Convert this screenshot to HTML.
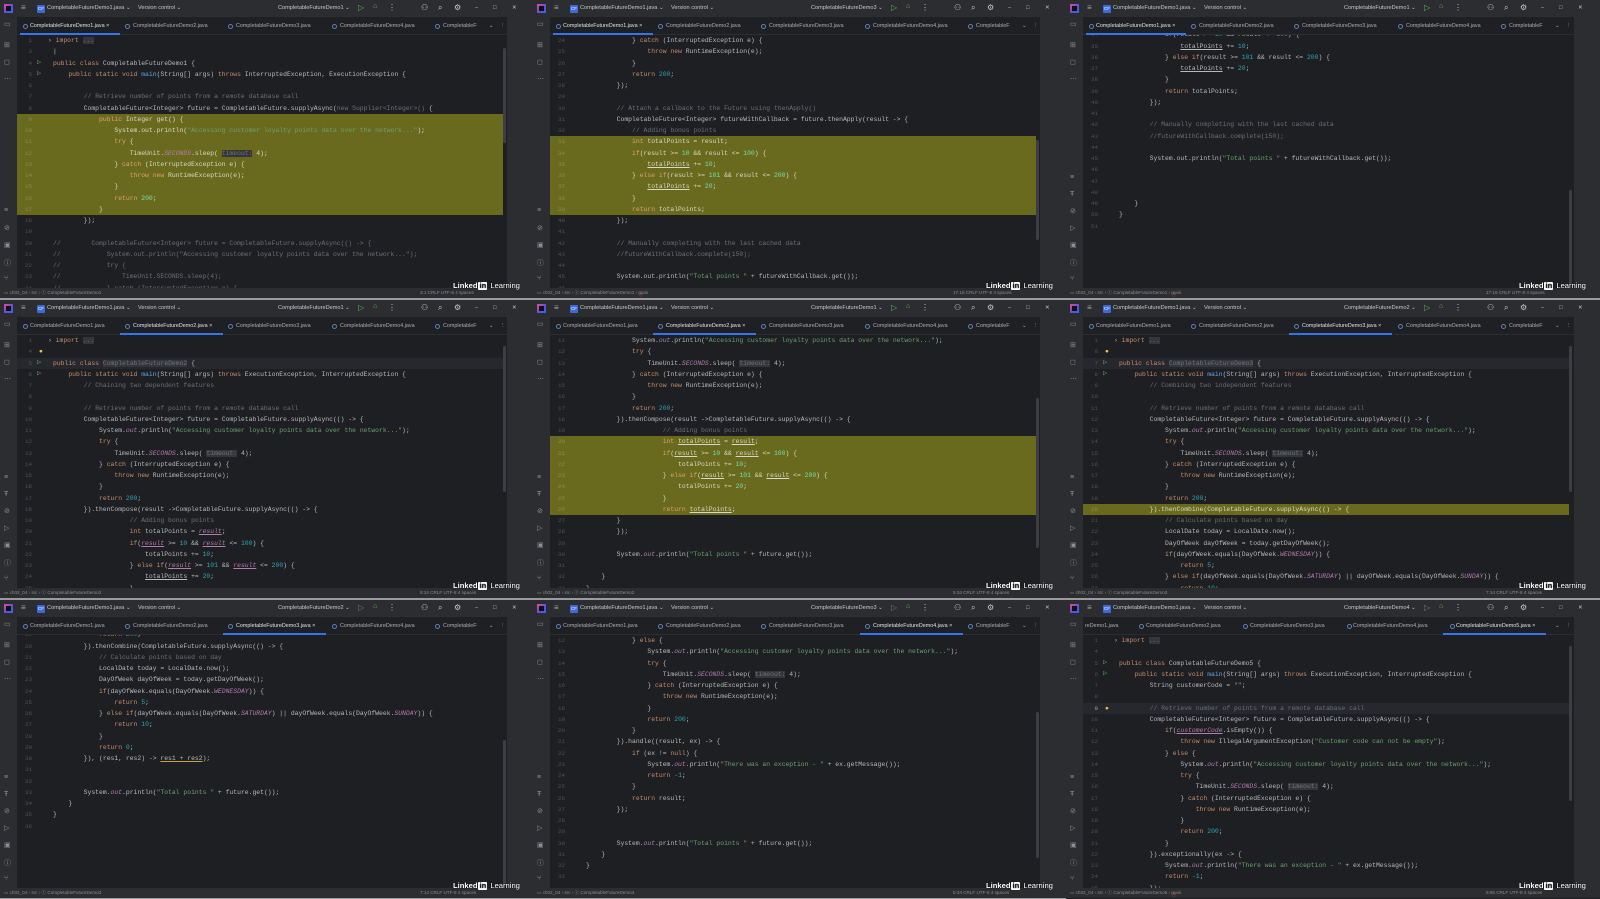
<!DOCTYPE html>
<html><head><meta charset="utf-8">
<style>
*{margin:0;padding:0;box-sizing:border-box}
body{width:1600px;height:899px;background:#1e1f22;position:relative;overflow:hidden;font-family:"Liberation Sans",sans-serif}
.p{position:absolute;width:533px;height:300px;background:#1e1f22;overflow:hidden}
.tb{position:absolute;left:0;top:0;width:100%;height:17px;background:#2b2d30;color:#c5c8cd;font-size:5.6px}
.tb span{position:absolute;top:5px;white-space:nowrap}
.tabs{position:absolute;left:17px;top:17px;right:26px;height:18px;background:#1f2023;border-bottom:1px solid #2b2d30;font-size:5.4px;color:#a9acb2}
.tabs span{position:absolute;top:5.5px;white-space:nowrap}
.tabs .ic{width:5px;height:5px;border-radius:50%;border:1px solid #5d7fb8;top:6.5px}
.ul{position:absolute;bottom:-1px;height:2px;background:#3574f0}
.ls{position:absolute;left:0;top:17px;width:17px;height:271px;background:#2b2d30;color:#8d9096;font-size:7px}
.ls span{position:absolute;left:4px}
.rs{position:absolute;right:0;top:17px;width:26px;height:271px;background:#2b2d30}
.sc{position:absolute;left:503px;width:3px;background:#3c3e43;border-radius:2px}
.ed{position:absolute;left:17px;top:35px;width:486px;height:253px;overflow:hidden;font-family:"Liberation Mono",monospace;font-size:6.4px;color:#b7b9be}
.cd{position:absolute;left:0;top:0;width:100%}
.r{position:relative;height:11.25px;line-height:11.25px;white-space:pre}
.r i{position:absolute;left:0;width:15px;text-align:right;font-style:normal;color:#4e525a;font-size:5.8px}
.r b{position:absolute;left:36px;font-weight:normal}
.r.h{background:#6a6a1f;color:#d8d8c8}
.r.h i{color:#8c8c50}
.r.cl{background:#26282d}
.k{color:#c98c6c}.s{color:#6aa06e}.n{color:#2aa8b5}.c{color:#6b6f76}.f{color:#b37bb0;font-style:italic}.m{color:#5aa3e8}
.hn{background:#34363b;color:#6f737a}
.u{text-decoration:underline}
.h .k{color:#e0a070}.h .n{color:#6ee0b0}
.gi{position:absolute;left:20px;color:#5fb865;font-size:7px}
.sb{position:absolute;left:0;top:288px;width:100%;height:10px;background:#2b2d30;color:#8a8d93;font-size:4.6px}
.sb span{position:absolute;top:2px;white-space:nowrap}
.sep{position:absolute;left:0;top:298px;width:100%;height:2px;background:#9a9b9e}
.wm{position:absolute;left:453px;top:281px;color:#fff;font-size:7.6px;white-space:nowrap;text-shadow:0 0 1px #000}
.wm b{font-weight:bold}
.wm em{font-style:normal;display:inline-block;background:#fff;color:#1e1f22;font-weight:bold;padding:0 1px;border-radius:1px;line-height:8px;margin:0 1px}
.logo{position:absolute;left:4px;top:4px;width:9px;height:9px;background:linear-gradient(135deg,#e84a8f,#5c4ee0 60%,#2a6ef0)}
.logo:after{content:"";position:absolute;left:2px;top:2px;width:5px;height:5px;background:#111}
.cf{position:absolute;left:37px;top:4.5px;width:8px;height:8px;background:#3c6bd9;border-radius:1px;color:#fff;font-size:4.5px;line-height:8px;text-align:center}
</style></head><body>

<!-- ============ PANEL 1 ============ -->
<div class="p" style="left:0;top:0">
<div class="tb"><div class="logo"></div><span style="left:21px;top:3px;font-size:8px;color:#aaa">≡</span><div class="cf">CF</div><span style="left:47px">CompletableFutureDemo1.java ⌄</span><span style="left:138px">Version control ⌄</span><span style="left:278px">CompletableFutureDemo1 ⌄</span><span style="left:358px;top:3px;font-size:8px;color:#5fb865">▷</span><span style="left:373px;top:3px;font-size:7px;color:#5fb865">⌂</span><span style="left:388px;top:3px;font-size:8px">⋮</span><span style="left:421px;top:3px;font-size:8px">⚇</span><span style="left:438px;top:3px;font-size:8px">⌕</span><span style="left:454px;top:3px;font-size:8px">⚙</span><span style="left:475px">–</span><span style="left:493px">□</span><span style="left:512px">✕</span></div>
<div class="ls"><span style="top:3px">▭</span><span style="top:24px">⊞</span><span style="top:41px">◻</span><span style="top:58px">⋯</span><span style="top:190px">≡</span><span style="top:207px">⊘</span><span style="top:224px">▣</span><span style="top:241px">ⓘ</span><span style="top:258px">⑂</span></div>
<div class="tabs"><span class="ic" style="left:6px"></span><span style="left:13px;color:#dfe1e5">CompletableFutureDemo1.java ×</span><span class="ic" style="left:108px"></span><span style="left:116px">CompletableFutureDemo2.java</span><span class="ic" style="left:211px"></span><span style="left:219px">CompletableFutureDemo3.java</span><span class="ic" style="left:315px"></span><span style="left:323px">CompletableFutureDemo4.java</span><span class="ic" style="left:418px"></span><span style="left:426px">CompletableF</span><span style="left:472px">⌄</span><span style="left:483px">⋮</span><div class="ul" style="left:3px;width:100px"></div></div>
<div class="rs"></div>
<div class="sc" style="top:48px;height:95px"></div>
<div class="ed"><div class="cd">
<div class="r"><i>1</i><b style="left:31px">› <span class="k">import</span> <span class="hn">...</span></b></div>
<div class="r"><i>3</i><b>|</b></div>
<div class="r"><i>4</i><span class="gi">▷</span><b><span class="k">public class</span> CompletableFutureDemo1 {</b></div>
<div class="r"><i>5</i><span class="gi">▷</span><b>    <span class="k">public static void</span> <span class="m">main</span>(String[] args) <span class="k">throws</span> InterruptedException, ExecutionException {</b></div>
<div class="r"><i>6</i><b></b></div>
<div class="r"><i>7</i><b>        <span class="c">// Retrieve number of points from a remote database call</span></b></div>
<div class="r"><i>8</i><b>        CompletableFuture&lt;Integer&gt; future = CompletableFuture.supplyAsync(<span class="c">new Supplier&lt;Integer&gt;()</span> {</b></div>
<div class="r h"><i>9</i><b>            <span class="k">public</span> Integer get() {</b></div>
<div class="r h"><i>10</i><b>                System.out.println(<span class="s">"Accessing customer loyalty points data over the network..."</span>);</b></div>
<div class="r h"><i>11</i><b>                <span class="k">try</span> {</b></div>
<div class="r h"><i>12</i><b>                    TimeUnit.<span class="f">SECONDS</span>.sleep( <span class="hn">timeout:</span> 4);</b></div>
<div class="r h"><i>13</i><b>                } <span class="k">catch</span> (InterruptedException e) {</b></div>
<div class="r h"><i>14</i><b>                    <span class="k">throw new</span> RuntimeException(e);</b></div>
<div class="r h"><i>15</i><b>                }</b></div>
<div class="r h"><i>16</i><b>                <span class="k">return</span> <span class="n">200</span>;</b></div>
<div class="r h"><i>17</i><b>            }</b></div>
<div class="r"><i>18</i><b>        });</b></div>
<div class="r"><i>19</i><b></b></div>
<div class="r c"><i>20</i><b>//        CompletableFuture&lt;Integer&gt; future = CompletableFuture.supplyAsync(() -&gt; {</b></div>
<div class="r c"><i>21</i><b>//            System.out.println("Accessing customer loyalty points data over the network...");</b></div>
<div class="r c"><i>22</i><b>//            try {</b></div>
<div class="r c"><i>23</i><b>//                TimeUnit.SECONDS.sleep(4);</b></div>
<div class="r c"><i>24</i><b>//            } catch (InterruptedException e) {</b></div>
</div></div>
<div class="sb"><span style="left:4px">▭ ch02_04 › src › ⓒ CompletableFutureDemo1</span><span style="left:420px">3:1   CRLF   UTF-8   4 spaces</span></div>
<div class="wm"><b>Linked</b><em>in</em> Learning</div>
<div class="sep"></div>
</div>

<!-- ============ PANEL 2 ============ -->
<div class="p" style="left:533px;top:0">
<div class="tb"><div class="logo"></div><span style="left:21px;top:3px;font-size:8px;color:#aaa">≡</span><div class="cf">CF</div><span style="left:47px">CompletableFutureDemo1.java ⌄</span><span style="left:138px">Version control ⌄</span><span style="left:278px">CompletableFutureDemo3 ⌄</span><span style="left:358px;top:3px;font-size:8px;color:#5fb865">▷</span><span style="left:373px;top:3px;font-size:7px;color:#5fb865">⌂</span><span style="left:388px;top:3px;font-size:8px">⋮</span><span style="left:421px;top:3px;font-size:8px">⚇</span><span style="left:438px;top:3px;font-size:8px">⌕</span><span style="left:454px;top:3px;font-size:8px">⚙</span><span style="left:475px">–</span><span style="left:493px">□</span><span style="left:512px">✕</span></div>
<div class="ls"><span style="top:3px">▭</span><span style="top:24px">⊞</span><span style="top:41px">◻</span><span style="top:58px">⋯</span><span style="top:190px">≡</span><span style="top:207px">⊘</span><span style="top:224px">▣</span><span style="top:241px">ⓘ</span><span style="top:258px">⑂</span></div>
<div class="tabs"><span class="ic" style="left:6px"></span><span style="left:13px;color:#dfe1e5">CompletableFutureDemo1.java ×</span><span class="ic" style="left:108px"></span><span style="left:116px">CompletableFutureDemo2.java</span><span class="ic" style="left:211px"></span><span style="left:219px">CompletableFutureDemo3.java</span><span class="ic" style="left:315px"></span><span style="left:323px">CompletableFutureDemo4.java</span><span class="ic" style="left:418px"></span><span style="left:426px">CompletableF</span><span style="left:472px">⌄</span><span style="left:483px">⋮</span><div class="ul" style="left:3px;width:100px"></div></div>
<div class="rs"></div>
<div class="sc" style="top:140px;height:100px"></div>
<div class="ed"><div class="cd">
<div class="r"><i>24</i><b>            } <span class="k">catch</span> (InterruptedException e) {</b></div>
<div class="r"><i>25</i><b>                <span class="k">throw new</span> RuntimeException(e);</b></div>
<div class="r"><i>26</i><b>            }</b></div>
<div class="r"><i>27</i><b>            <span class="k">return</span> <span class="n">200</span>;</b></div>
<div class="r"><i>28</i><b>        });</b></div>
<div class="r"><i>29</i><b></b></div>
<div class="r"><i>30</i><b>        <span class="c">// Attach a callback to the Future using thenApply()</span></b></div>
<div class="r"><i>31</i><b>        CompletableFuture&lt;Integer&gt; futureWithCallback = future.thenApply(result -&gt; {</b></div>
<div class="r"><i>32</i><b>            <span class="c">// Adding bonus points</span></b></div>
<div class="r h"><i>33</i><b>            <span class="k">int</span> totalPoints = result;</b></div>
<div class="r h"><i>34</i><b>            <span class="k">if</span>(result &gt;= <span class="n">10</span> &amp;&amp; result &lt;= <span class="n">100</span>) {</b></div>
<div class="r h"><i>35</i><b>                <span class="u">totalPoints</span> += <span class="n">10</span>;</b></div>
<div class="r h"><i>36</i><b>            } <span class="k">else if</span>(result &gt;= <span class="n">101</span> &amp;&amp; result &lt;= <span class="n">200</span>) {</b></div>
<div class="r h"><i>37</i><b>                <span class="u">totalPoints</span> += <span class="n">20</span>;</b></div>
<div class="r h"><i>38</i><b>            }</b></div>
<div class="r h"><i>39</i><b>            <span class="k">return</span> totalPoints;</b></div>
<div class="r"><i>40</i><b>        });</b></div>
<div class="r"><i>41</i><b></b></div>
<div class="r"><i>42</i><b>        <span class="c">// Manually completing with the last cached data</span></b></div>
<div class="r"><i>43</i><b>        <span class="c">//futureWithCallback.complete(150);</span></b></div>
<div class="r"><i>44</i><b></b></div>
<div class="r"><i>45</i><b>        System.out.println(<span class="s">"Total points "</span> + futureWithCallback.get());</b></div>
<div class="r"><i>46</i><b></b></div>
</div></div>
<div class="sb"><span style="left:4px">▭ ch02_04 › src › ⓒ CompletableFutureDemo1 › <span style="color:#d9534f">ⓜ</span> main</span><span style="left:420px">17:16   CRLF   UTF-8   4 spaces</span></div>
<div class="wm"><b>Linked</b><em>in</em> Learning</div>
<div class="sep"></div>
</div>

<!-- ============ PANEL 3 ============ -->
<div class="p" style="left:1066px;top:0;width:534px">
<div class="tb"><div class="logo"></div><span style="left:21px;top:3px;font-size:8px;color:#aaa">≡</span><div class="cf">CF</div><span style="left:47px">CompletableFutureDemo1.java ⌄</span><span style="left:138px">Version control ⌄</span><span style="left:278px">CompletableFutureDemo1 ⌄</span><span style="left:358px;top:3px;font-size:8px;color:#5fb865">▷</span><span style="left:373px;top:3px;font-size:7px;color:#5fb865">⌂</span><span style="left:388px;top:3px;font-size:8px">⋮</span><span style="left:421px;top:3px;font-size:8px">⚇</span><span style="left:438px;top:3px;font-size:8px">⌕</span><span style="left:454px;top:3px;font-size:8px">⚙</span><span style="left:475px">–</span><span style="left:493px">□</span><span style="left:512px">✕</span></div>
<div class="ls"><span style="top:3px">▭</span><span style="top:24px">⊞</span><span style="top:41px">◻</span><span style="top:58px">⋯</span><span style="top:157px">≡</span><span style="top:174px">Ŧ</span><span style="top:190px">⊘</span><span style="top:207px">▷</span><span style="top:224px">▣</span><span style="top:241px">ⓘ</span><span style="top:258px">⑂</span></div>
<div class="tabs"><span class="ic" style="left:6px"></span><span style="left:13px;color:#dfe1e5">CompletableFutureDemo1.java ×</span><span class="ic" style="left:108px"></span><span style="left:116px">CompletableFutureDemo2.java</span><span class="ic" style="left:211px"></span><span style="left:219px">CompletableFutureDemo3.java</span><span class="ic" style="left:315px"></span><span style="left:323px">CompletableFutureDemo4.java</span><span class="ic" style="left:418px"></span><span style="left:426px">CompletableF</span><span style="left:472px">⌄</span><span style="left:483px">⋮</span><div class="ul" style="left:3px;width:100px"></div></div>
<div class="rs"></div>
<div class="sc" style="top:190px;height:95px"></div>
<div class="ed"><div class="cd" style="top:-5.6px">
<div class="r"><i>34</i><b>            <span class="k">if</span>(result &gt;= <span class="n">10</span> &amp;&amp; result &lt;= <span class="n">100</span>) {</b></div>
<div class="r"><i>35</i><b>                <span class="u">totalPoints</span> += <span class="n">10</span>;</b></div>
<div class="r"><i>36</i><b>            } <span class="k">else if</span>(result &gt;= <span class="n">101</span> &amp;&amp; result &lt;= <span class="n">200</span>) {</b></div>
<div class="r"><i>37</i><b>                <span class="u">totalPoints</span> += <span class="n">20</span>;</b></div>
<div class="r"><i>38</i><b>            }</b></div>
<div class="r"><i>39</i><b>            <span class="k">return</span> totalPoints;</b></div>
<div class="r"><i>40</i><b>        });</b></div>
<div class="r"><i>41</i><b></b></div>
<div class="r"><i>42</i><b>        <span class="c">// Manually completing with the last cached data</span></b></div>
<div class="r"><i>43</i><b>        <span class="c">//futureWithCallback.complete(150);</span></b></div>
<div class="r"><i>44</i><b></b></div>
<div class="r"><i>45</i><b>        System.out.println(<span class="s">"Total points "</span> + futureWithCallback.get());</b></div>
<div class="r"><i>46</i><b></b></div>
<div class="r"><i>47</i><b></b></div>
<div class="r"><i>48</i><b></b></div>
<div class="r"><i>49</i><b>    }</b></div>
<div class="r"><i>50</i><b>}</b></div>
<div class="r"><i>51</i><b></b></div>
</div></div>
<div class="sb"><span style="left:4px">▭ ch02_04 › src › ⓒ CompletableFutureDemo1 › <span style="color:#d9534f">ⓜ</span> main</span><span style="left:420px">17:16   CRLF   UTF-8   4 spaces</span></div>
<div class="wm"><b>Linked</b><em>in</em> Learning</div>
<div class="sep"></div>
</div>

<!-- ============ PANEL 4 ============ -->
<div class="p" style="left:0;top:300px">
<div class="tb"><div class="logo"></div><span style="left:21px;top:3px;font-size:8px;color:#aaa">≡</span><div class="cf">CF</div><span style="left:47px">CompletableFutureDemo1.java ⌄</span><span style="left:138px">Version control ⌄</span><span style="left:278px">CompletableFutureDemo1 ⌄</span><span style="left:358px;top:3px;font-size:8px;color:#5fb865">▷</span><span style="left:373px;top:3px;font-size:7px;color:#5fb865">⌂</span><span style="left:388px;top:3px;font-size:8px">⋮</span><span style="left:421px;top:3px;font-size:8px">⚇</span><span style="left:438px;top:3px;font-size:8px">⌕</span><span style="left:454px;top:3px;font-size:8px">⚙</span><span style="left:475px">–</span><span style="left:493px">□</span><span style="left:512px">✕</span></div>
<div class="ls"><span style="top:3px">▭</span><span style="top:24px">⊞</span><span style="top:41px">◻</span><span style="top:58px">⋯</span><span style="top:157px">≡</span><span style="top:174px">Ŧ</span><span style="top:190px">⊘</span><span style="top:207px">▷</span><span style="top:224px">▣</span><span style="top:241px">ⓘ</span><span style="top:258px">⑂</span></div>
<div class="tabs"><span class="ic" style="left:6px"></span><span style="left:13px">CompletableFutureDemo1.java</span><span class="ic" style="left:108px"></span><span style="left:116px;color:#dfe1e5">CompletableFutureDemo2.java ×</span><span class="ic" style="left:211px"></span><span style="left:219px">CompletableFutureDemo3.java</span><span class="ic" style="left:315px"></span><span style="left:323px">CompletableFutureDemo4.java</span><span class="ic" style="left:418px"></span><span style="left:426px">CompletableF</span><span style="left:472px">⌄</span><span style="left:483px">⋮</span><div class="ul" style="left:103px;width:103px"></div></div>
<div class="rs"></div>
<div class="sc" style="top:46px;height:146px"></div>
<div class="ed"><div class="cd">
<div class="r"><i>1</i><b style="left:31px">› <span class="k">import</span> <span class="hn">...</span></b></div>
<div class="r"><i>4</i><b style="left:22px;color:#e8c44a">●</b></div>
<div class="r cl"><i>5</i><span class="gi">▷</span><b><span class="k">public class</span> <span class="hn">CompletableFutureDemo2</span> {</b></div>
<div class="r"><i>6</i><span class="gi">▷</span><b>    <span class="k">public static void</span> <span class="m">main</span>(String[] args) <span class="k">throws</span> ExecutionException, InterruptedException {</b></div>
<div class="r"><i>7</i><b>        <span class="c">// Chaining two dependent features</span></b></div>
<div class="r"><i>8</i><b></b></div>
<div class="r"><i>9</i><b>        <span class="c">// Retrieve number of points from a remote database call</span></b></div>
<div class="r"><i>10</i><b>        CompletableFuture&lt;Integer&gt; future = CompletableFuture.supplyAsync(() -&gt; {</b></div>
<div class="r"><i>11</i><b>            System.<span class="f">out</span>.println(<span class="s">"Accessing customer loyalty points data over the network..."</span>);</b></div>
<div class="r"><i>12</i><b>            <span class="k">try</span> {</b></div>
<div class="r"><i>13</i><b>                TimeUnit.<span class="f">SECONDS</span>.sleep( <span class="hn">timeout:</span> 4);</b></div>
<div class="r"><i>14</i><b>            } <span class="k">catch</span> (InterruptedException e) {</b></div>
<div class="r"><i>15</i><b>                <span class="k">throw new</span> RuntimeException(e);</b></div>
<div class="r"><i>16</i><b>            }</b></div>
<div class="r"><i>17</i><b>            <span class="k">return</span> <span class="n">200</span>;</b></div>
<div class="r"><i>18</i><b>        }).thenCompose(result -&gt;CompletableFuture.supplyAsync(() -&gt; {</b></div>
<div class="r"><i>19</i><b>                    <span class="c">// Adding bonus points</span></b></div>
<div class="r"><i>20</i><b>                    <span class="k">int</span> totalPoints = <span class="f u">result</span>;</b></div>
<div class="r"><i>21</i><b>                    <span class="k">if</span>(<span class="f u">result</span> &gt;= <span class="n">10</span> &amp;&amp; <span class="f u">result</span> &lt;= <span class="n">100</span>) {</b></div>
<div class="r"><i>22</i><b>                        totalPoints += <span class="n">10</span>;</b></div>
<div class="r"><i>23</i><b>                    } <span class="k">else if</span>(<span class="f u">result</span> &gt;= <span class="n">101</span> &amp;&amp; <span class="f u">result</span> &lt;= <span class="n">200</span>) {</b></div>
<div class="r"><i>24</i><b>                        <span class="u">totalPoints</span> += <span class="n">20</span>;</b></div>
<div class="r"><i>25</i><b>                    }</b></div>
</div></div>
<div class="sb"><span style="left:4px">▭ ch02_04 › src › ⓒ CompletableFutureDemo2</span><span style="left:420px">5:34   CRLF   UTF-8   4 spaces</span></div>
<div class="wm"><b>Linked</b><em>in</em> Learning</div>
<div class="sep"></div>
</div>

<!-- ============ PANEL 5 ============ -->
<div class="p" style="left:533px;top:300px">
<div class="tb"><div class="logo"></div><span style="left:21px;top:3px;font-size:8px;color:#aaa">≡</span><div class="cf">CF</div><span style="left:47px">CompletableFutureDemo1.java ⌄</span><span style="left:138px">Version control ⌄</span><span style="left:278px">CompletableFutureDemo1 ⌄</span><span style="left:358px;top:3px;font-size:8px;color:#5fb865">▷</span><span style="left:373px;top:3px;font-size:7px;color:#5fb865">⌂</span><span style="left:388px;top:3px;font-size:8px">⋮</span><span style="left:421px;top:3px;font-size:8px">⚇</span><span style="left:438px;top:3px;font-size:8px">⌕</span><span style="left:454px;top:3px;font-size:8px">⚙</span><span style="left:475px">–</span><span style="left:493px">□</span><span style="left:512px">✕</span></div>
<div class="ls"><span style="top:3px">▭</span><span style="top:24px">⊞</span><span style="top:41px">◻</span><span style="top:58px">⋯</span><span style="top:157px">≡</span><span style="top:174px">Ŧ</span><span style="top:190px">⊘</span><span style="top:207px">▷</span><span style="top:224px">▣</span><span style="top:241px">ⓘ</span><span style="top:258px">⑂</span></div>
<div class="tabs"><span class="ic" style="left:6px"></span><span style="left:13px">CompletableFutureDemo1.java</span><span class="ic" style="left:108px"></span><span style="left:116px;color:#dfe1e5">CompletableFutureDemo2.java ×</span><span class="ic" style="left:211px"></span><span style="left:219px">CompletableFutureDemo3.java</span><span class="ic" style="left:315px"></span><span style="left:323px">CompletableFutureDemo4.java</span><span class="ic" style="left:418px"></span><span style="left:426px">CompletableF</span><span style="left:472px">⌄</span><span style="left:483px">⋮</span><div class="ul" style="left:103px;width:103px"></div></div>
<div class="rs"></div>
<div class="sc" style="top:98px;height:150px"></div>
<div class="ed"><div class="cd">
<div class="r"><i>11</i><b>            System.<span class="f">out</span>.println(<span class="s">"Accessing customer loyalty points data over the network..."</span>);</b></div>
<div class="r"><i>12</i><b>            <span class="k">try</span> {</b></div>
<div class="r"><i>13</i><b>                TimeUnit.<span class="f">SECONDS</span>.sleep( <span class="hn">timeout:</span> 4);</b></div>
<div class="r"><i>14</i><b>            } <span class="k">catch</span> (InterruptedException e) {</b></div>
<div class="r"><i>15</i><b>                <span class="k">throw new</span> RuntimeException(e);</b></div>
<div class="r"><i>16</i><b>            }</b></div>
<div class="r"><i>17</i><b>            <span class="k">return</span> <span class="n">200</span>;</b></div>
<div class="r"><i>18</i><b>        }).thenCompose(result -&gt;CompletableFuture.supplyAsync(() -&gt; {</b></div>
<div class="r"><i>19</i><b>                    <span class="c">// Adding bonus points</span></b></div>
<div class="r h"><i>20</i><b>                    <span class="k">int</span> <span class="u">totalPoints</span> = <span class="u">result</span>;</b></div>
<div class="r h"><i>21</i><b>                    <span class="k">if</span>(<span class="u">result</span> &gt;= <span class="n">10</span> &amp;&amp; <span class="u">result</span> &lt;= <span class="n">100</span>) {</b></div>
<div class="r h"><i>22</i><b>                        totalPoints += <span class="n">10</span>;</b></div>
<div class="r h"><i>23</i><b>                    } <span class="k">else if</span>(<span class="u">result</span> &gt;= <span class="n">101</span> &amp;&amp; <span class="u">result</span> &lt;= <span class="n">200</span>) {</b></div>
<div class="r h"><i>24</i><b>                        totalPoints += <span class="n">20</span>;</b></div>
<div class="r h"><i>25</i><b>                    }</b></div>
<div class="r h"><i>26</i><b>                    <span class="k">return</span> <span class="u">totalPoints</span>;</b></div>
<div class="r"><i>27</i><b>        }</b></div>
<div class="r"><i>28</i><b>        });</b></div>
<div class="r"><i>29</i><b></b></div>
<div class="r"><i>30</i><b>        System.<span class="f">out</span>.println(<span class="s">"Total points "</span> + future.get());</b></div>
<div class="r"><i>31</i><b></b></div>
<div class="r"><i>32</i><b>    }</b></div>
<div class="r"><i>33</i><b>}</b></div>
</div></div>
<div class="sb"><span style="left:4px">▭ ch02_04 › src › ⓒ CompletableFutureDemo2</span><span style="left:420px">5:34   CRLF   UTF-8   4 spaces</span></div>
<div class="wm"><b>Linked</b><em>in</em> Learning</div>
<div class="sep"></div>
</div>

<!-- ============ PANEL 6 ============ -->
<div class="p" style="left:1066px;top:300px;width:534px">
<div class="tb"><div class="logo"></div><span style="left:21px;top:3px;font-size:8px;color:#aaa">≡</span><div class="cf">CF</div><span style="left:47px">CompletableFutureDemo1.java ⌄</span><span style="left:138px">Version control ⌄</span><span style="left:278px">CompletableFutureDemo2 ⌄</span><span style="left:358px;top:3px;font-size:8px;color:#5fb865">▷</span><span style="left:373px;top:3px;font-size:7px;color:#5fb865">⌂</span><span style="left:388px;top:3px;font-size:8px">⋮</span><span style="left:421px;top:3px;font-size:8px">⚇</span><span style="left:438px;top:3px;font-size:8px">⌕</span><span style="left:454px;top:3px;font-size:8px">⚙</span><span style="left:475px">–</span><span style="left:493px">□</span><span style="left:512px">✕</span></div>
<div class="ls"><span style="top:3px">▭</span><span style="top:24px">⊞</span><span style="top:41px">◻</span><span style="top:58px">⋯</span><span style="top:157px">≡</span><span style="top:174px">Ŧ</span><span style="top:190px">⊘</span><span style="top:207px">▷</span><span style="top:224px">▣</span><span style="top:241px">ⓘ</span><span style="top:258px">⑂</span></div>
<div class="tabs"><span class="ic" style="left:6px"></span><span style="left:13px">CompletableFutureDemo1.java</span><span class="ic" style="left:108px"></span><span style="left:116px">CompletableFutureDemo2.java</span><span class="ic" style="left:211px"></span><span style="left:219px;color:#dfe1e5">CompletableFutureDemo3.java ×</span><span class="ic" style="left:315px"></span><span style="left:323px">CompletableFutureDemo4.java</span><span class="ic" style="left:418px"></span><span style="left:426px">CompletableF</span><span style="left:472px">⌄</span><span style="left:483px">⋮</span><div class="ul" style="left:206px;width:103px"></div></div>
<div class="rs"></div>
<div class="sc" style="top:46px;height:146px"></div>
<div class="ed"><div class="cd">
<div class="r"><i>1</i><b style="left:31px">› <span class="k">import</span> <span class="hn">...</span></b></div>
<div class="r"><i>6</i><b style="left:22px;color:#e8c44a">●</b></div>
<div class="r cl"><i>7</i><span class="gi">▷</span><b><span class="k">public class</span> <span class="hn">CompletableFutureDemo3</span> {</b></div>
<div class="r"><i>8</i><span class="gi">▷</span><b>    <span class="k">public static void</span> <span class="m">main</span>(String[] args) <span class="k">throws</span> ExecutionException, InterruptedException {</b></div>
<div class="r"><i>9</i><b>        <span class="c">// Combining two independent features</span></b></div>
<div class="r"><i>10</i><b></b></div>
<div class="r"><i>11</i><b>        <span class="c">// Retrieve number of points from a remote database call</span></b></div>
<div class="r"><i>12</i><b>        CompletableFuture&lt;Integer&gt; future = CompletableFuture.supplyAsync(() -&gt; {</b></div>
<div class="r"><i>13</i><b>            System.<span class="f">out</span>.println(<span class="s">"Accessing customer loyalty points data over the network..."</span>);</b></div>
<div class="r"><i>14</i><b>            <span class="k">try</span> {</b></div>
<div class="r"><i>15</i><b>                TimeUnit.<span class="f">SECONDS</span>.sleep( <span class="hn">timeout:</span> 4);</b></div>
<div class="r"><i>16</i><b>            } <span class="k">catch</span> (InterruptedException e) {</b></div>
<div class="r"><i>17</i><b>                <span class="k">throw new</span> RuntimeException(e);</b></div>
<div class="r"><i>18</i><b>            }</b></div>
<div class="r"><i>19</i><b>            <span class="k">return</span> <span class="n">200</span>;</b></div>
<div class="r h"><i>20</i><b>        }).thenCombine(CompletableFuture.supplyAsync(() -&gt; {</b></div>
<div class="r"><i>21</i><b>            <span class="c">// Calculate points based on day</span></b></div>
<div class="r"><i>22</i><b>            LocalDate today = LocalDate.now();</b></div>
<div class="r"><i>23</i><b>            DayOfWeek dayOfWeek = today.getDayOfWeek();</b></div>
<div class="r"><i>24</i><b>            <span class="k">if</span>(dayOfWeek.equals(DayOfWeek.<span class="f">WEDNESDAY</span>)) {</b></div>
<div class="r"><i>25</i><b>                <span class="k">return</span> <span class="n">5</span>;</b></div>
<div class="r"><i>26</i><b>            } <span class="k">else if</span>(dayOfWeek.equals(DayOfWeek.<span class="f">SATURDAY</span>) || dayOfWeek.equals(DayOfWeek.<span class="f">SUNDAY</span>)) {</b></div>
<div class="r"><i>27</i><b>                <span class="k">return</span> <span class="n">10</span>;</b></div>
</div></div>
<div class="sb"><span style="left:4px">▭ ch02_04 › src › ⓒ CompletableFutureDemo3</span><span style="left:420px">7:14   CRLF   UTF-8   4 spaces</span></div>
<div class="wm"><b>Linked</b><em>in</em> Learning</div>
<div class="sep"></div>
</div>

<!-- ============ PANEL 7 ============ -->
<div class="p" style="left:0;top:600px;height:299px">
<div class="tb"><div class="logo"></div><span style="left:21px;top:3px;font-size:8px;color:#aaa">≡</span><div class="cf">CF</div><span style="left:47px">CompletableFutureDemo1.java ⌄</span><span style="left:138px">Version control ⌄</span><span style="left:278px">CompletableFutureDemo2 ⌄</span><span style="left:358px;top:3px;font-size:8px;color:#777">▷</span><span style="left:373px;top:3px;font-size:7px;color:#5fb865">⌂</span><span style="left:388px;top:3px;font-size:8px">⋮</span><span style="left:421px;top:3px;font-size:8px">⚇</span><span style="left:438px;top:3px;font-size:8px">⌕</span><span style="left:454px;top:3px;font-size:8px">⚙</span><span style="left:475px">–</span><span style="left:493px">□</span><span style="left:512px">✕</span></div>
<div class="ls"><span style="top:3px">▭</span><span style="top:24px">⊞</span><span style="top:41px">◻</span><span style="top:58px">⋯</span><span style="top:157px">≡</span><span style="top:174px">Ŧ</span><span style="top:190px">⊘</span><span style="top:207px">▷</span><span style="top:224px">▣</span><span style="top:241px">ⓘ</span><span style="top:258px">⑂</span></div>
<div class="tabs"><span class="ic" style="left:6px"></span><span style="left:13px">CompletableFutureDemo1.java</span><span class="ic" style="left:108px"></span><span style="left:116px">CompletableFutureDemo2.java</span><span class="ic" style="left:211px"></span><span style="left:219px;color:#dfe1e5">CompletableFutureDemo3.java ×</span><span class="ic" style="left:315px"></span><span style="left:323px">CompletableFutureDemo4.java</span><span class="ic" style="left:418px"></span><span style="left:426px">CompletableF</span><span style="left:472px">⌄</span><span style="left:483px">⋮</span><div class="ul" style="left:206px;width:103px"></div></div>
<div class="rs"></div>
<div class="sc" style="top:140px;height:146px"></div>
<div class="ed"><div class="cd" style="top:-5.6px">
<div class="r"><i>19</i><b>            <span class="k">return</span> <span class="n">200</span>;</b></div>
<div class="r"><i>20</i><b>        }).thenCombine(CompletableFuture.supplyAsync(() -&gt; {</b></div>
<div class="r"><i>21</i><b>            <span class="c">// Calculate points based on day</span></b></div>
<div class="r"><i>22</i><b>            LocalDate today = LocalDate.now();</b></div>
<div class="r"><i>23</i><b>            DayOfWeek dayOfWeek = today.getDayOfWeek();</b></div>
<div class="r"><i>24</i><b>            <span class="k">if</span>(dayOfWeek.equals(DayOfWeek.<span class="f">WEDNESDAY</span>)) {</b></div>
<div class="r"><i>25</i><b>                <span class="k">return</span> <span class="n">5</span>;</b></div>
<div class="r"><i>26</i><b>            } <span class="k">else if</span>(dayOfWeek.equals(DayOfWeek.<span class="f">SATURDAY</span>) || dayOfWeek.equals(DayOfWeek.<span class="f">SUNDAY</span>)) {</b></div>
<div class="r"><i>27</i><b>                <span class="k">return</span> <span class="n">10</span>;</b></div>
<div class="r"><i>28</i><b>            }</b></div>
<div class="r"><i>29</i><b>            <span class="k">return</span> <span class="n">0</span>;</b></div>
<div class="r"><i>30</i><b>        }), (res1, res2) -&gt; <span class="u" style="text-decoration-color:#c9a040">res1 + res2</span>);</b></div>
<div class="r"><i>31</i><b></b></div>
<div class="r"><i>32</i><b></b></div>
<div class="r"><i>33</i><b>        System.<span class="f">out</span>.println(<span class="s">"Total points "</span> + future.get());</b></div>
<div class="r"><i>34</i><b>    }</b></div>
<div class="r"><i>35</i><b>}</b></div>
<div class="r"><i>36</i><b></b></div>
</div></div>
<div class="sb"><span style="left:4px">▭ ch02_04 › src › ⓒ CompletableFutureDemo3</span><span style="left:420px">7:14   CRLF   UTF-8   4 spaces</span></div>
<div class="wm"><b>Linked</b><em>in</em> Learning</div>
<div class="sep"></div>
</div>

<!-- ============ PANEL 8 ============ -->
<div class="p" style="left:533px;top:600px;height:299px">
<div class="tb"><div class="logo"></div><span style="left:21px;top:3px;font-size:8px;color:#aaa">≡</span><div class="cf">CF</div><span style="left:47px">CompletableFutureDemo1.java ⌄</span><span style="left:138px">Version control ⌄</span><span style="left:278px">CompletableFutureDemo3 ⌄</span><span style="left:358px;top:3px;font-size:8px;color:#777">▷</span><span style="left:373px;top:3px;font-size:7px;color:#5fb865">⌂</span><span style="left:388px;top:3px;font-size:8px">⋮</span><span style="left:421px;top:3px;font-size:8px">⚇</span><span style="left:438px;top:3px;font-size:8px">⌕</span><span style="left:454px;top:3px;font-size:8px">⚙</span><span style="left:475px">–</span><span style="left:493px">□</span><span style="left:512px">✕</span></div>
<div class="ls"><span style="top:3px">▭</span><span style="top:24px">⊞</span><span style="top:41px">◻</span><span style="top:58px">⋯</span><span style="top:157px">≡</span><span style="top:174px">Ŧ</span><span style="top:190px">⊘</span><span style="top:207px">▷</span><span style="top:224px">▣</span><span style="top:241px">ⓘ</span><span style="top:258px">⑂</span></div>
<div class="tabs"><span class="ic" style="left:6px"></span><span style="left:13px">CompletableFutureDemo1.java</span><span class="ic" style="left:108px"></span><span style="left:116px">CompletableFutureDemo2.java</span><span class="ic" style="left:211px"></span><span style="left:219px">CompletableFutureDemo3.java</span><span class="ic" style="left:315px"></span><span style="left:323px;color:#dfe1e5">CompletableFutureDemo4.java ×</span><span class="ic" style="left:418px"></span><span style="left:426px">CompletableF</span><span style="left:472px">⌄</span><span style="left:483px">⋮</span><div class="ul" style="left:310px;width:103px"></div></div>
<div class="rs"></div>
<div class="sc" style="top:112px;height:146px"></div>
<div class="ed"><div class="cd">
<div class="r"><i>12</i><b>            } <span class="k">else</span> {</b></div>
<div class="r"><i>13</i><b>                System.<span class="f">out</span>.println(<span class="s">"Accessing customer loyalty points data over the network..."</span>);</b></div>
<div class="r"><i>14</i><b>                <span class="k">try</span> {</b></div>
<div class="r"><i>15</i><b>                    TimeUnit.<span class="f">SECONDS</span>.sleep( <span class="hn">timeout:</span> 4);</b></div>
<div class="r"><i>16</i><b>                } <span class="k">catch</span> (InterruptedException e) {</b></div>
<div class="r"><i>17</i><b>                    <span class="k">throw new</span> RuntimeException(e);</b></div>
<div class="r"><i>18</i><b>                }</b></div>
<div class="r"><i>19</i><b>                <span class="k">return</span> <span class="n">200</span>;</b></div>
<div class="r"><i>20</i><b>            }</b></div>
<div class="r"><i>21</i><b>        }).handle((result, ex) -&gt; {</b></div>
<div class="r"><i>22</i><b>            <span class="k">if</span> (ex != <span class="k">null</span>) {</b></div>
<div class="r"><i>23</i><b>                System.<span class="f">out</span>.println(<span class="s">"There was an exception - "</span> + ex.getMessage());</b></div>
<div class="r"><i>24</i><b>                <span class="k">return</span> <span class="n">-1</span>;</b></div>
<div class="r"><i>25</i><b>            }</b></div>
<div class="r"><i>26</i><b>            <span class="k">return</span> result;</b></div>
<div class="r"><i>27</i><b>        });</b></div>
<div class="r"><i>28</i><b></b></div>
<div class="r"><i>29</i><b></b></div>
<div class="r"><i>30</i><b>        System.<span class="f">out</span>.println(<span class="s">"Total points "</span> + future.get());</b></div>
<div class="r"><i>31</i><b>    }</b></div>
<div class="r"><i>32</i><b>}</b></div>
<div class="r"><i>33</i><b></b></div>
</div></div>
<div class="sb"><span style="left:4px">▭ ch02_04 › src › ⓒ CompletableFutureDemo4</span><span style="left:420px">5:34   CRLF   UTF-8   4 spaces</span></div>
<div class="wm"><b>Linked</b><em>in</em> Learning</div>
<div class="sep"></div>
</div>

<!-- ============ PANEL 9 ============ -->
<div class="p" style="left:1066px;top:600px;width:534px;height:299px">
<div class="tb"><div class="logo"></div><span style="left:21px;top:3px;font-size:8px;color:#aaa">≡</span><div class="cf">CF</div><span style="left:47px">CompletableFutureDemo1.java ⌄</span><span style="left:138px">Version control ⌄</span><span style="left:278px">CompletableFutureDemo4 ⌄</span><span style="left:358px;top:3px;font-size:8px;color:#777">▷</span><span style="left:373px;top:3px;font-size:7px;color:#5fb865">⌂</span><span style="left:388px;top:3px;font-size:8px">⋮</span><span style="left:421px;top:3px;font-size:8px">⚇</span><span style="left:438px;top:3px;font-size:8px">⌕</span><span style="left:454px;top:3px;font-size:8px">⚙</span><span style="left:475px">–</span><span style="left:493px">□</span><span style="left:512px">✕</span></div>
<div class="ls"><span style="top:3px">▭</span><span style="top:24px">⊞</span><span style="top:41px">◻</span><span style="top:58px">⋯</span><span style="top:157px">≡</span><span style="top:174px">Ŧ</span><span style="top:190px">⊘</span><span style="top:207px">▷</span><span style="top:224px">▣</span><span style="top:241px">ⓘ</span><span style="top:258px">⑂</span></div>
<div class="tabs"><span style="left:2px">reDemo1.java</span><span class="ic" style="left:56px"></span><span style="left:63px">CompletableFutureDemo2.java</span><span class="ic" style="left:160px"></span><span style="left:167px">CompletableFutureDemo3.java</span><span class="ic" style="left:264px"></span><span style="left:270px">CompletableFutureDemo4.java</span><span class="ic" style="left:367px"></span><span style="left:373px;color:#dfe1e5">CompletableFutureDemo5.java ×</span><span style="left:472px">⌄</span><span style="left:483px">⋮</span><div class="ul" style="left:360px;width:103px"></div></div>
<div class="rs"></div>
<div class="sc" style="top:46px;height:155px"></div>
<div class="ed"><div class="cd">
<div class="r"><i>1</i><b style="left:31px">› <span class="k">import</span> <span class="hn">...</span></b></div>
<div class="r"><i>4</i><b></b></div>
<div class="r"><i>5</i><span class="gi">▷</span><b><span class="k">public class</span> CompletableFutureDemo5 {</b></div>
<div class="r"><i>6</i><span class="gi">▷</span><b>    <span class="k">public static void</span> <span class="m">main</span>(String[] args) <span class="k">throws</span> ExecutionException, InterruptedException {</b></div>
<div class="r"><i>7</i><b>        String customerCode = <span class="s">""</span>;</b></div>
<div class="r"><i>8</i><b></b></div>
<div class="r cl"><i style="color:#a0a3a8">9</i><b style="left:22px;color:#e8c44a">●</b><b>        <span class="c">// Retrieve number of points from a remote database call</span></b></div>
<div class="r"><i>10</i><b>        CompletableFuture&lt;Integer&gt; future = CompletableFuture.supplyAsync(() -&gt; {</b></div>
<div class="r"><i>11</i><b>            <span class="k">if</span>(<span class="f u">customerCode</span>.isEmpty()) {</b></div>
<div class="r"><i>12</i><b>                <span class="k">throw new</span> IllegalArgumentException(<span class="s">"Customer code can not be empty"</span>);</b></div>
<div class="r"><i>13</i><b>            } <span class="k">else</span> {</b></div>
<div class="r"><i>14</i><b>                System.<span class="f">out</span>.println(<span class="s">"Accessing customer loyalty points data over the network..."</span>);</b></div>
<div class="r"><i>15</i><b>                <span class="k">try</span> {</b></div>
<div class="r"><i>16</i><b>                    TimeUnit.<span class="f">SECONDS</span>.sleep( <span class="hn">timeout:</span> 4);</b></div>
<div class="r"><i>17</i><b>                } <span class="k">catch</span> (InterruptedException e) {</b></div>
<div class="r"><i>18</i><b>                    <span class="k">throw new</span> RuntimeException(e);</b></div>
<div class="r"><i>19</i><b>                }</b></div>
<div class="r"><i>20</i><b>                <span class="k">return</span> <span class="n">200</span>;</b></div>
<div class="r"><i>21</i><b>            }</b></div>
<div class="r"><i>22</i><b>        }).exceptionally(ex -&gt; {</b></div>
<div class="r"><i>23</i><b>            System.<span class="f">out</span>.println(<span class="s">"There was an exception - "</span> + ex.getMessage());</b></div>
<div class="r"><i>24</i><b>            <span class="k">return</span> <span class="n">-1</span>;</b></div>
<div class="r"><i>25</i><b>        });</b></div>
</div></div>
<div class="sb"><span style="left:4px">▭ ch02_04 › src › ⓒ CompletableFutureDemo5 › <span style="color:#d9534f">ⓜ</span> main</span><span style="left:420px">9:65   CRLF   UTF-8   4 spaces</span></div>
<div class="wm"><b>Linked</b><em>in</em> Learning</div>
</div>

</body></html>
